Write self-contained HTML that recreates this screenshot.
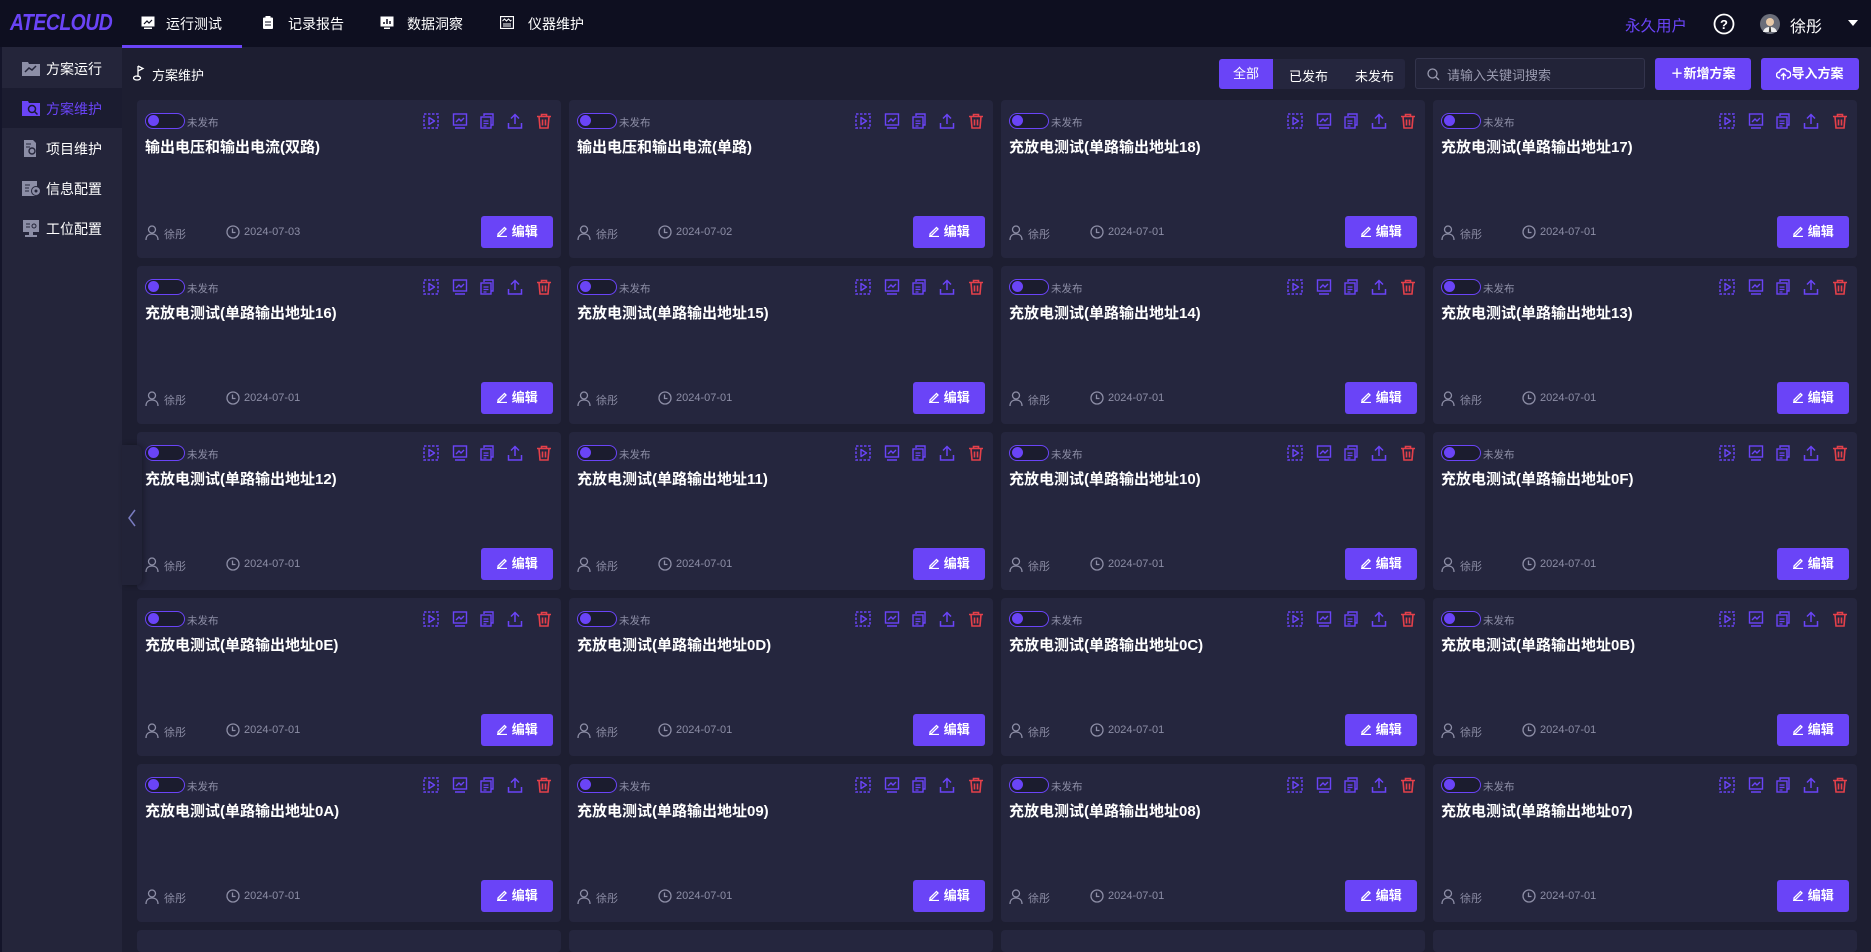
<!DOCTYPE html>
<html style="width:1871px;height:952px;overflow:hidden"><head><meta charset="utf-8"><style>
*{margin:0;padding:0;box-sizing:border-box}
body{width:1871px;height:952px;overflow:hidden;background:#1d1e31;font-family:"Liberation Sans","Noto Sans CJK SC",sans-serif;position:relative;color:#fff}
.hdr{position:absolute;left:0;top:0;width:1871px;height:47px;background:#0e0f20}
.logo{position:absolute;left:10px;top:10px;font-size:21px;font-weight:bold;font-style:italic;color:#6a44f7;letter-spacing:-0.5px;transform:scale(0.92,1.1);transform-origin:left top}
.nav{position:absolute;top:14px;font-size:14px;color:#fff}
.navi{position:absolute;top:16px;width:14px;height:13px}
.uline{position:absolute;left:122px;top:45px;width:120px;height:3px;background:#6a44f7}
.side{position:absolute;left:2px;top:47px;width:120px;height:905px;background:#24253a}
.sitem{position:absolute;left:0;width:120px;height:40px;font-size:14px;color:#fff}
.sitem span{position:absolute;left:44px;top:11px}
.sitem svg{position:absolute;left:20px;top:12px}
.crumb{position:absolute;left:133px;top:65px;font-size:13px;color:#fff}
.ftabs{position:absolute;left:1219px;top:59px;width:186px;height:30px;background:#25263e;border-radius:3px;font-size:13px}
.ftabs div{position:absolute;top:7px}
.search{position:absolute;left:1415px;top:58px;width:230px;height:31px;border:1px solid #33344c;border-radius:3px;background:#222338;font-size:13px;color:#9a9bb0}
.btn{position:absolute;top:58px;height:32px;background:#6a44f7;border-radius:3px;font-size:13px;font-weight:bold;color:#fff;text-align:center;line-height:32px}
.card{position:absolute;width:424px;height:158px;background:#25263e;border-radius:4px;overflow:hidden}
.tg{position:absolute;left:8px;top:13px;width:40px;height:16px;border:1.5px solid #6a44f7;border-radius:8px;background:#1b1c2e}
.tg:after{content:"";position:absolute;left:2px;top:1px;width:11px;height:11px;border-radius:50%;background:#6a44f7}
.st{position:absolute;left:50px;top:15px;font-size:10.5px;color:#8d8ea6}
.tt{position:absolute;left:8px;top:36px;font-size:15px;font-weight:bold;color:#fff;white-space:nowrap}
.us{position:absolute;left:8px;top:125px;width:14px;height:15px}
.un{position:absolute;left:27px;top:126px;font-size:11px;color:#8d8ea6}
.ck{position:absolute;left:89px;top:125px;width:14px;height:14px}
.dt{position:absolute;left:107px;top:126px;font-size:11px;color:#8d8ea6}
.eb{position:absolute;left:344px;top:116px;width:72px;height:32px;background:#6a44f7;border-radius:3px;font-size:13px;font-weight:bold;color:#fff;line-height:32px;text-align:center}
</style></head><body>
<svg width="0" height="0" style="position:absolute">
<defs>
<symbol id="play" viewBox="0 0 16 16"><rect x="1" y="1" width="14" height="14" fill="none" stroke="#6a44f7" stroke-width="1.5" stroke-dasharray="2.5 1.5"/><path d="M6 4.5v7l5.5-3.5z" fill="none" stroke="#6a44f7" stroke-width="1.4" stroke-linejoin="round"/></symbol>
<symbol id="mon" viewBox="0 0 16 16"><rect x="1.5" y="1" width="13" height="11" fill="none" stroke="#6a44f7" stroke-width="1.4"/><path d="M4 9l3-3 2 2 3-3M3 15h10" fill="none" stroke="#6a44f7" stroke-width="1.4"/></symbol>
<symbol id="copy" viewBox="0 0 16 16"><path d="M5 3V1h9v11h-2" fill="none" stroke="#6a44f7" stroke-width="1.4"/><rect x="2" y="4" width="10" height="11" fill="none" stroke="#6a44f7" stroke-width="1.4"/><path d="M4.5 8h5M4.5 10.5h5M4.5 13h3" stroke="#6a44f7" stroke-width="1.2"/></symbol>
<symbol id="up" viewBox="0 0 16 16"><path d="M8 11V1.5M4 5.5l4-4 4 4M1.5 10v5h13v-5" fill="none" stroke="#6a44f7" stroke-width="1.5"/></symbol>
<symbol id="del" viewBox="0 0 16 16"><path d="M1 3.5h14M5.5 3.5V1.5h5v2M3 3.5l1 11.5h8l1-11.5M6.5 6.5v6M9.5 6.5v6" fill="none" stroke="#e4404a" stroke-width="1.6"/></symbol>
<symbol id="user" viewBox="0 0 14 15"><circle cx="7" cy="4.5" r="3.5" fill="none" stroke="#8d8ea6" stroke-width="1.3"/><path d="M1 15c0-4 2.5-6 6-6s6 2 6 6" fill="none" stroke="#8d8ea6" stroke-width="1.3"/></symbol>
<symbol id="clk" viewBox="0 0 14 14"><circle cx="7" cy="7" r="6" fill="none" stroke="#8d8ea6" stroke-width="1.3"/><path d="M6.5 3.5v4h3" fill="none" stroke="#8d8ea6" stroke-width="1.3"/></symbol>
<symbol id="pen" viewBox="0 0 12 12"><path d="M2 9l6.5-6.5 1.5 1.5L3.5 10.5H2z M1 11.5h10" fill="none" stroke="#fff" stroke-width="1.3"/></symbol>
<g id="icons"><use href="#play" x="286" y="13" width="16" height="16"/><use href="#mon" x="315" y="13" width="16" height="16"/><use href="#copy" x="342" y="13" width="16" height="16"/><use href="#up" x="370" y="13" width="16" height="16"/><use href="#del" x="399" y="13" width="16" height="16"/></g>
</defs></svg>

<div class="hdr">
<div class="logo">ATECLOUD</div>
<svg class="navi" style="left:141px" viewBox="0 0 14 13"><rect x="0.5" y="0.5" width="13" height="10" fill="#fff"/><path d="M3 8l3-3 2 2 3-3" stroke="#0e0f20" stroke-width="1.2" fill="none"/><rect x="3" y="11.5" width="8" height="1.5" fill="#fff"/></svg>
<div class="nav" style="left:166px">运行测试</div>
<svg class="navi" style="left:261px" viewBox="0 0 14 13"><rect x="2" y="1.5" width="10" height="11.5" rx="1" fill="#fff"/><rect x="4.5" y="0" width="5" height="2.5" fill="#fff"/><path d="M4 6h6M4 9h6" stroke="#0e0f20"/></svg>
<div class="nav" style="left:288px">记录报告</div>
<svg class="navi" style="left:380px" viewBox="0 0 14 13"><rect x="0.5" y="0.5" width="13" height="10" fill="#fff"/><path d="M4 8V6M7 8V3M10 8V5" stroke="#0e0f20" stroke-width="1.5"/><rect x="4" y="11.5" width="6" height="1.5" fill="#fff"/></svg>
<div class="nav" style="left:407px">数据洞察</div>
<svg class="navi" style="left:500px" viewBox="0 0 14 13"><rect x="0.5" y="0.5" width="13" height="12" fill="none" stroke="#fff" stroke-width="1.3"/><path d="M2.5 5l2-2 2 2 2-2 2 2 1-1M3 8h8M3 10h8" stroke="#fff" fill="none"/></svg>
<div class="nav" style="left:528px">仪器维护</div>
<div class="uline"></div>
<div style="position:absolute;left:1625px;top:14px;font-size:15.5px;color:#6a44f7">永久用户</div>
<svg style="position:absolute;left:1713px;top:13px" width="22" height="22" viewBox="0 0 22 22"><circle cx="11" cy="11" r="9.5" fill="none" stroke="#fff" stroke-width="1.8"/><text x="11" y="16" text-anchor="middle" font-size="13" font-weight="bold" fill="#fff" font-family="Liberation Sans">?</text></svg>
<svg style="position:absolute;left:1760px;top:14px" width="20" height="20" viewBox="0 0 20 20"><circle cx="10" cy="10" r="10" fill="#6b6e7a"/><circle cx="10" cy="8" r="4" fill="#e8c9a8"/><path d="M3 18c1-4 4-5 7-5s6 1 7 5z" fill="#f0f0f0"/><path d="M9.3 13h1.4l.5 5h-2.4z" fill="#333"/></svg>
<div style="position:absolute;left:1790px;top:13px;font-size:16px;color:#fff">徐彤</div>
<div style="position:absolute;left:1848px;top:20px;width:0;height:0;border-left:5px solid transparent;border-right:5px solid transparent;border-top:6px solid #fff"></div>
</div>

<div style="position:absolute;left:0;top:47px;width:2px;height:905px;background:#14152a"></div>
<div class="side">
<div class="sitem" style="top:1px"><svg width="18" height="16" viewBox="0 0 18 16"><path d="M0 2h6l1 2h11v12H0z" fill="#8c8ea6"/><path d="M3 12l4-4 3 2 4-4" stroke="#24253a" stroke-width="1.5" fill="none"/></svg><span>方案运行</span></div>
<div class="sitem" style="top:41px;background:#1b1c30;color:#6a44f7"><svg width="18" height="16" viewBox="0 0 18 16"><path d="M0 1h6l1 2h11v13H0z" fill="#6a44f7"/><circle cx="10" cy="9" r="3.5" fill="none" stroke="#1b1c30" stroke-width="1.5"/><path d="M12.5 11.5l3 3" stroke="#1b1c30" stroke-width="1.5"/></svg><span>方案维护</span></div>
<div class="sitem" style="top:81px"><svg width="18" height="17" viewBox="0 0 18 17"><path d="M2 0h9l3 3v14H2z" fill="#8c8ea6"/><circle cx="10" cy="11" r="3" fill="none" stroke="#24253a" stroke-width="1.4"/><path d="M4 4h5M4 7h4" stroke="#24253a"/></svg><span>项目维护</span></div>
<div class="sitem" style="top:121px"><svg width="20" height="17" viewBox="0 0 20 17"><rect x="0" y="1" width="15" height="15" fill="#8c8ea6"/><path d="M3 5h5M3 8h4M3 11h4" stroke="#24253a"/><circle cx="14" cy="11" r="4.5" fill="#8c8ea6" stroke="#24253a"/><circle cx="14" cy="11" r="1.5" fill="#24253a"/></svg><span>信息配置</span></div>
<div class="sitem" style="top:161px"><svg width="18" height="18" viewBox="0 0 18 18"><rect x="1" y="0" width="16" height="12" fill="#8c8ea6"/><path d="M4 4h4M4 7h4" stroke="#24253a"/><circle cx="12" cy="6" r="2" fill="none" stroke="#24253a"/><rect x="7" y="12" width="4" height="3" fill="#8c8ea6"/><rect x="3" y="15" width="12" height="2" fill="#8c8ea6"/></svg><span>工位配置</span></div>
</div>

<svg style="position:absolute;left:133px;top:65px" width="12" height="16" viewBox="0 0 12 16"><path d="M5 1v11M5 1l5 2.5L5 6" fill="none" stroke="#fff" stroke-width="1.3"/><ellipse cx="4" cy="13" rx="3.5" ry="2" fill="none" stroke="#fff" stroke-width="1.3"/></svg>
<div class="crumb" style="left:152px">方案维护</div>

<div class="ftabs"><div style="left:0;top:0;width:54px;height:30px;background:#6a44f7;border-radius:3px 0 0 3px;line-height:30px;text-align:center">全部</div><div style="left:70px">已发布</div><div style="left:136px">未发布</div></div>
<div class="search"><svg style="position:absolute;left:11px;top:9px" width="13" height="13" viewBox="0 0 13 13"><circle cx="5.5" cy="5.5" r="4.5" fill="none" stroke="#9a9bb0" stroke-width="1.3"/><path d="M9 9l3 3" stroke="#9a9bb0" stroke-width="1.3"/></svg><span style="position:absolute;left:31px;top:6px">请输入关键词搜索</span></div>
<div class="btn" style="left:1655px;width:96px">＋新增方案</div>
<div class="btn" style="left:1761px;width:98px"><svg style="vertical-align:-3px" width="15" height="14" viewBox="0 0 15 14"><path d="M4 11H3.5a3 3 0 010-6 4 4 0 017.5-1 3 3 0 01.5 7H11M7.5 13V7M5 9l2.5-2.5L10 9" fill="none" stroke="#fff" stroke-width="1.4"/></svg>导入方案</div>

<div class="card" style="left:137px;top:100px"><div class="tg"></div><div class="st">未发布</div><svg width="424" height="40" style="position:absolute;left:0;top:0"><use href="#icons"/></svg><div class="tt">输出电压和输出电流(双路)</div><svg class="us"><use href="#user"/></svg><div class="un">徐彤</div><svg class="ck"><use href="#clk"/></svg><div class="dt">2024-07-03</div><div class="eb"><svg width="12" height="12" style="vertical-align:-1px"><use href="#pen"/></svg> 编辑</div></div>
<div class="card" style="left:569px;top:100px"><div class="tg"></div><div class="st">未发布</div><svg width="424" height="40" style="position:absolute;left:0;top:0"><use href="#icons"/></svg><div class="tt">输出电压和输出电流(单路)</div><svg class="us"><use href="#user"/></svg><div class="un">徐彤</div><svg class="ck"><use href="#clk"/></svg><div class="dt">2024-07-02</div><div class="eb"><svg width="12" height="12" style="vertical-align:-1px"><use href="#pen"/></svg> 编辑</div></div>
<div class="card" style="left:1001px;top:100px"><div class="tg"></div><div class="st">未发布</div><svg width="424" height="40" style="position:absolute;left:0;top:0"><use href="#icons"/></svg><div class="tt">充放电测试(单路输出地址18)</div><svg class="us"><use href="#user"/></svg><div class="un">徐彤</div><svg class="ck"><use href="#clk"/></svg><div class="dt">2024-07-01</div><div class="eb"><svg width="12" height="12" style="vertical-align:-1px"><use href="#pen"/></svg> 编辑</div></div>
<div class="card" style="left:1433px;top:100px"><div class="tg"></div><div class="st">未发布</div><svg width="424" height="40" style="position:absolute;left:0;top:0"><use href="#icons"/></svg><div class="tt">充放电测试(单路输出地址17)</div><svg class="us"><use href="#user"/></svg><div class="un">徐彤</div><svg class="ck"><use href="#clk"/></svg><div class="dt">2024-07-01</div><div class="eb"><svg width="12" height="12" style="vertical-align:-1px"><use href="#pen"/></svg> 编辑</div></div>

<div class="card" style="left:137px;top:266px"><div class="tg"></div><div class="st">未发布</div><svg width="424" height="40" style="position:absolute;left:0;top:0"><use href="#icons"/></svg><div class="tt">充放电测试(单路输出地址16)</div><svg class="us"><use href="#user"/></svg><div class="un">徐彤</div><svg class="ck"><use href="#clk"/></svg><div class="dt">2024-07-01</div><div class="eb"><svg width="12" height="12" style="vertical-align:-1px"><use href="#pen"/></svg> 编辑</div></div>
<div class="card" style="left:569px;top:266px"><div class="tg"></div><div class="st">未发布</div><svg width="424" height="40" style="position:absolute;left:0;top:0"><use href="#icons"/></svg><div class="tt">充放电测试(单路输出地址15)</div><svg class="us"><use href="#user"/></svg><div class="un">徐彤</div><svg class="ck"><use href="#clk"/></svg><div class="dt">2024-07-01</div><div class="eb"><svg width="12" height="12" style="vertical-align:-1px"><use href="#pen"/></svg> 编辑</div></div>
<div class="card" style="left:1001px;top:266px"><div class="tg"></div><div class="st">未发布</div><svg width="424" height="40" style="position:absolute;left:0;top:0"><use href="#icons"/></svg><div class="tt">充放电测试(单路输出地址14)</div><svg class="us"><use href="#user"/></svg><div class="un">徐彤</div><svg class="ck"><use href="#clk"/></svg><div class="dt">2024-07-01</div><div class="eb"><svg width="12" height="12" style="vertical-align:-1px"><use href="#pen"/></svg> 编辑</div></div>
<div class="card" style="left:1433px;top:266px"><div class="tg"></div><div class="st">未发布</div><svg width="424" height="40" style="position:absolute;left:0;top:0"><use href="#icons"/></svg><div class="tt">充放电测试(单路输出地址13)</div><svg class="us"><use href="#user"/></svg><div class="un">徐彤</div><svg class="ck"><use href="#clk"/></svg><div class="dt">2024-07-01</div><div class="eb"><svg width="12" height="12" style="vertical-align:-1px"><use href="#pen"/></svg> 编辑</div></div>

<div class="card" style="left:137px;top:432px"><div class="tg"></div><div class="st">未发布</div><svg width="424" height="40" style="position:absolute;left:0;top:0"><use href="#icons"/></svg><div class="tt">充放电测试(单路输出地址12)</div><svg class="us"><use href="#user"/></svg><div class="un">徐彤</div><svg class="ck"><use href="#clk"/></svg><div class="dt">2024-07-01</div><div class="eb"><svg width="12" height="12" style="vertical-align:-1px"><use href="#pen"/></svg> 编辑</div></div>
<div class="card" style="left:569px;top:432px"><div class="tg"></div><div class="st">未发布</div><svg width="424" height="40" style="position:absolute;left:0;top:0"><use href="#icons"/></svg><div class="tt">充放电测试(单路输出地址11)</div><svg class="us"><use href="#user"/></svg><div class="un">徐彤</div><svg class="ck"><use href="#clk"/></svg><div class="dt">2024-07-01</div><div class="eb"><svg width="12" height="12" style="vertical-align:-1px"><use href="#pen"/></svg> 编辑</div></div>
<div class="card" style="left:1001px;top:432px"><div class="tg"></div><div class="st">未发布</div><svg width="424" height="40" style="position:absolute;left:0;top:0"><use href="#icons"/></svg><div class="tt">充放电测试(单路输出地址10)</div><svg class="us"><use href="#user"/></svg><div class="un">徐彤</div><svg class="ck"><use href="#clk"/></svg><div class="dt">2024-07-01</div><div class="eb"><svg width="12" height="12" style="vertical-align:-1px"><use href="#pen"/></svg> 编辑</div></div>
<div class="card" style="left:1433px;top:432px"><div class="tg"></div><div class="st">未发布</div><svg width="424" height="40" style="position:absolute;left:0;top:0"><use href="#icons"/></svg><div class="tt">充放电测试(单路输出地址0F)</div><svg class="us"><use href="#user"/></svg><div class="un">徐彤</div><svg class="ck"><use href="#clk"/></svg><div class="dt">2024-07-01</div><div class="eb"><svg width="12" height="12" style="vertical-align:-1px"><use href="#pen"/></svg> 编辑</div></div>

<div class="card" style="left:137px;top:598px"><div class="tg"></div><div class="st">未发布</div><svg width="424" height="40" style="position:absolute;left:0;top:0"><use href="#icons"/></svg><div class="tt">充放电测试(单路输出地址0E)</div><svg class="us"><use href="#user"/></svg><div class="un">徐彤</div><svg class="ck"><use href="#clk"/></svg><div class="dt">2024-07-01</div><div class="eb"><svg width="12" height="12" style="vertical-align:-1px"><use href="#pen"/></svg> 编辑</div></div>
<div class="card" style="left:569px;top:598px"><div class="tg"></div><div class="st">未发布</div><svg width="424" height="40" style="position:absolute;left:0;top:0"><use href="#icons"/></svg><div class="tt">充放电测试(单路输出地址0D)</div><svg class="us"><use href="#user"/></svg><div class="un">徐彤</div><svg class="ck"><use href="#clk"/></svg><div class="dt">2024-07-01</div><div class="eb"><svg width="12" height="12" style="vertical-align:-1px"><use href="#pen"/></svg> 编辑</div></div>
<div class="card" style="left:1001px;top:598px"><div class="tg"></div><div class="st">未发布</div><svg width="424" height="40" style="position:absolute;left:0;top:0"><use href="#icons"/></svg><div class="tt">充放电测试(单路输出地址0C)</div><svg class="us"><use href="#user"/></svg><div class="un">徐彤</div><svg class="ck"><use href="#clk"/></svg><div class="dt">2024-07-01</div><div class="eb"><svg width="12" height="12" style="vertical-align:-1px"><use href="#pen"/></svg> 编辑</div></div>
<div class="card" style="left:1433px;top:598px"><div class="tg"></div><div class="st">未发布</div><svg width="424" height="40" style="position:absolute;left:0;top:0"><use href="#icons"/></svg><div class="tt">充放电测试(单路输出地址0B)</div><svg class="us"><use href="#user"/></svg><div class="un">徐彤</div><svg class="ck"><use href="#clk"/></svg><div class="dt">2024-07-01</div><div class="eb"><svg width="12" height="12" style="vertical-align:-1px"><use href="#pen"/></svg> 编辑</div></div>

<div class="card" style="left:137px;top:764px"><div class="tg"></div><div class="st">未发布</div><svg width="424" height="40" style="position:absolute;left:0;top:0"><use href="#icons"/></svg><div class="tt">充放电测试(单路输出地址0A)</div><svg class="us"><use href="#user"/></svg><div class="un">徐彤</div><svg class="ck"><use href="#clk"/></svg><div class="dt">2024-07-01</div><div class="eb"><svg width="12" height="12" style="vertical-align:-1px"><use href="#pen"/></svg> 编辑</div></div>
<div class="card" style="left:569px;top:764px"><div class="tg"></div><div class="st">未发布</div><svg width="424" height="40" style="position:absolute;left:0;top:0"><use href="#icons"/></svg><div class="tt">充放电测试(单路输出地址09)</div><svg class="us"><use href="#user"/></svg><div class="un">徐彤</div><svg class="ck"><use href="#clk"/></svg><div class="dt">2024-07-01</div><div class="eb"><svg width="12" height="12" style="vertical-align:-1px"><use href="#pen"/></svg> 编辑</div></div>
<div class="card" style="left:1001px;top:764px"><div class="tg"></div><div class="st">未发布</div><svg width="424" height="40" style="position:absolute;left:0;top:0"><use href="#icons"/></svg><div class="tt">充放电测试(单路输出地址08)</div><svg class="us"><use href="#user"/></svg><div class="un">徐彤</div><svg class="ck"><use href="#clk"/></svg><div class="dt">2024-07-01</div><div class="eb"><svg width="12" height="12" style="vertical-align:-1px"><use href="#pen"/></svg> 编辑</div></div>
<div class="card" style="left:1433px;top:764px"><div class="tg"></div><div class="st">未发布</div><svg width="424" height="40" style="position:absolute;left:0;top:0"><use href="#icons"/></svg><div class="tt">充放电测试(单路输出地址07)</div><svg class="us"><use href="#user"/></svg><div class="un">徐彤</div><svg class="ck"><use href="#clk"/></svg><div class="dt">2024-07-01</div><div class="eb"><svg width="12" height="12" style="vertical-align:-1px"><use href="#pen"/></svg> 编辑</div></div>

<div class="card" style="left:137px;top:930px;height:22px"></div>
<div class="card" style="left:569px;top:930px;height:22px"></div>
<div class="card" style="left:1001px;top:930px;height:22px"></div>
<div class="card" style="left:1433px;top:930px;height:22px"></div>

<div style="position:absolute;left:122px;top:445px;width:20px;height:140px;background:#222338;border-radius:0 6px 6px 0;box-shadow:2px 0 6px rgba(0,0,0,.3)"></div>
<svg style="position:absolute;left:127px;top:509px" width="10" height="18" viewBox="0 0 10 18"><path d="M8 1L2 9l6 8" fill="none" stroke="#7a7cc0" stroke-width="1.5"/></svg>
</body></html>
